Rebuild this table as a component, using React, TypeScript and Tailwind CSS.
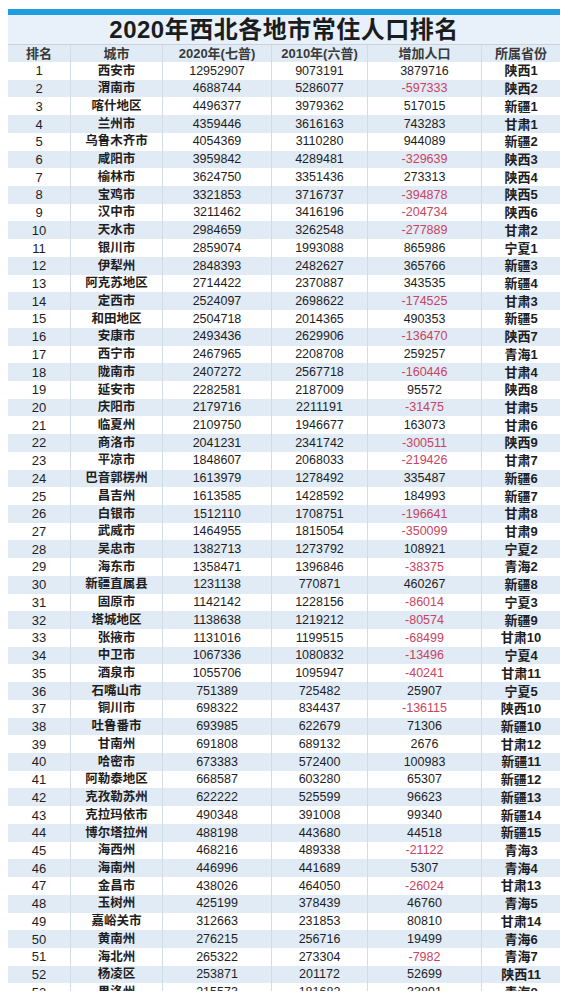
import React from "react";

type Row = [number, string, string, string, string, string];

const rows: Row[] = [
  [1, "西安市", "12952907", "9073191", "3879716", "陕西1"],
  [2, "渭南市", "4688744", "5286077", "-597333", "陕西2"],
  [3, "喀什地区", "4496377", "3979362", "517015", "新疆1"],
  [4, "兰州市", "4359446", "3616163", "743283", "甘肃1"],
  [5, "乌鲁木齐市", "4054369", "3110280", "944089", "新疆2"],
  [6, "咸阳市", "3959842", "4289481", "-329639", "陕西3"],
  [7, "榆林市", "3624750", "3351436", "273313", "陕西4"],
  [8, "宝鸡市", "3321853", "3716737", "-394878", "陕西5"],
  [9, "汉中市", "3211462", "3416196", "-204734", "陕西6"],
  [10, "天水市", "2984659", "3262548", "-277889", "甘肃2"],
  [11, "银川市", "2859074", "1993088", "865986", "宁夏1"],
  [12, "伊犁州", "2848393", "2482627", "365766", "新疆3"],
  [13, "阿克苏地区", "2714422", "2370887", "343535", "新疆4"],
  [14, "定西市", "2524097", "2698622", "-174525", "甘肃3"],
  [15, "和田地区", "2504718", "2014365", "490353", "新疆5"],
  [16, "安康市", "2493436", "2629906", "-136470", "陕西7"],
  [17, "西宁市", "2467965", "2208708", "259257", "青海1"],
  [18, "陇南市", "2407272", "2567718", "-160446", "甘肃4"],
  [19, "延安市", "2282581", "2187009", "95572", "陕西8"],
  [20, "庆阳市", "2179716", "2211191", "-31475", "甘肃5"],
  [21, "临夏州", "2109750", "1946677", "163073", "甘肃6"],
  [22, "商洛市", "2041231", "2341742", "-300511", "陕西9"],
  [23, "平凉市", "1848607", "2068033", "-219426", "甘肃7"],
  [24, "巴音郭楞州", "1613979", "1278492", "335487", "新疆6"],
  [25, "昌吉州", "1613585", "1428592", "184993", "新疆7"],
  [26, "白银市", "1512110", "1708751", "-196641", "甘肃8"],
  [27, "武威市", "1464955", "1815054", "-350099", "甘肃9"],
  [28, "吴忠市", "1382713", "1273792", "108921", "宁夏2"],
  [29, "海东市", "1358471", "1396846", "-38375", "青海2"],
  [30, "新疆直属县", "1231138", "770871", "460267", "新疆8"],
  [31, "固原市", "1142142", "1228156", "-86014", "宁夏3"],
  [32, "塔城地区", "1138638", "1219212", "-80574", "新疆9"],
  [33, "张掖市", "1131016", "1199515", "-68499", "甘肃10"],
  [34, "中卫市", "1067336", "1080832", "-13496", "宁夏4"],
  [35, "酒泉市", "1055706", "1095947", "-40241", "甘肃11"],
  [36, "石嘴山市", "751389", "725482", "25907", "宁夏5"],
  [37, "铜川市", "698322", "834437", "-136115", "陕西10"],
  [38, "吐鲁番市", "693985", "622679", "71306", "新疆10"],
  [39, "甘南州", "691808", "689132", "2676", "甘肃12"],
  [40, "哈密市", "673383", "572400", "100983", "新疆11"],
  [41, "阿勒泰地区", "668587", "603280", "65307", "新疆12"],
  [42, "克孜勒苏州", "622222", "525599", "96623", "新疆13"],
  [43, "克拉玛依市", "490348", "391008", "99340", "新疆14"],
  [44, "博尔塔拉州", "488198", "443680", "44518", "新疆15"],
  [45, "海西州", "468216", "489338", "-21122", "青海3"],
  [46, "海南州", "446996", "441689", "5307", "青海4"],
  [47, "金昌市", "438026", "464050", "-26024", "甘肃13"],
  [48, "玉树州", "425199", "378439", "46760", "青海5"],
  [49, "嘉峪关市", "312663", "231853", "80810", "甘肃14"],
  [50, "黄南州", "276215", "256716", "19499", "青海6"],
  [51, "海北州", "265322", "273304", "-7982", "青海7"],
  [52, "杨凌区", "253871", "201172", "52699", "陕西11"],
  [53, "果洛州", "215573", "181682", "33891", "青海8"],
];

const FONT = { fontFamily: '"Liberation Sans", "Noto Sans CJK SC", sans-serif' };

const cell = "flex items-center justify-center border-r border-[#d3dbe3] last:border-r-0";

function Cols({ children, className }: { children: React.ReactNode; className: string }) {
  return (
    <div className={`grid grid-cols-[63px_92px_109px_96px_114px_78px] ${className}`}>{children}</div>
  );
}

export default function App() {
  return (
    <div className="w-[568px] h-[1000px] bg-white" style={FONT}>
      <div className="h-[991px] overflow-hidden pt-[9px] pl-[8px]">
        <div className="w-[552px]">
          <div className="h-[6px] bg-[#1e9ee0]" />
          <div className="h-[30px] bg-[#e8f1f9] border-b border-[#c9d2da] flex items-center justify-center">
            <span className="text-[24px] leading-none font-bold text-[#1c1c1c] tracking-[0.5px]">
              2020年西北各地市常住人口排名
            </span>
          </div>
          <Cols className="h-[17px] bg-[#e1ebf5] text-[13px] font-bold text-[#3a3a3a] leading-none">
            <div className={cell}>排名</div>
            <div className={cell}>城市</div>
            <div className={cell}>2020年(七普)</div>
            <div className={cell}>2010年(六普)</div>
            <div className={cell}>增加人口</div>
            <div className={cell}>所属省份</div>
          </Cols>
          {rows.map((r, i) => {
            const neg = r[4].startsWith("-");
            return (
              <Cols
                key={r[0]}
                className={`h-[17.73px] leading-none text-[12.5px] text-[#1e1e1e] ${
                  i % 2 === 0 ? "bg-white" : "bg-[#e1ebf6]"
                }`}
              >
                <div className={`${cell} text-[13px]`}>{r[0]}</div>
                <div className={`${cell} font-bold text-[12.5px]`}>{r[1]}</div>
                <div className={cell}>{r[2]}</div>
                <div className={cell}>{r[3]}</div>
                <div className={`${cell} ${neg ? "text-[#c8435e]" : ""}`}>{r[4]}</div>
                <div className={`${cell} font-bold text-[13px]`}>{r[5]}</div>
              </Cols>
            );
          })}
        </div>
      </div>
    </div>
  );
}
